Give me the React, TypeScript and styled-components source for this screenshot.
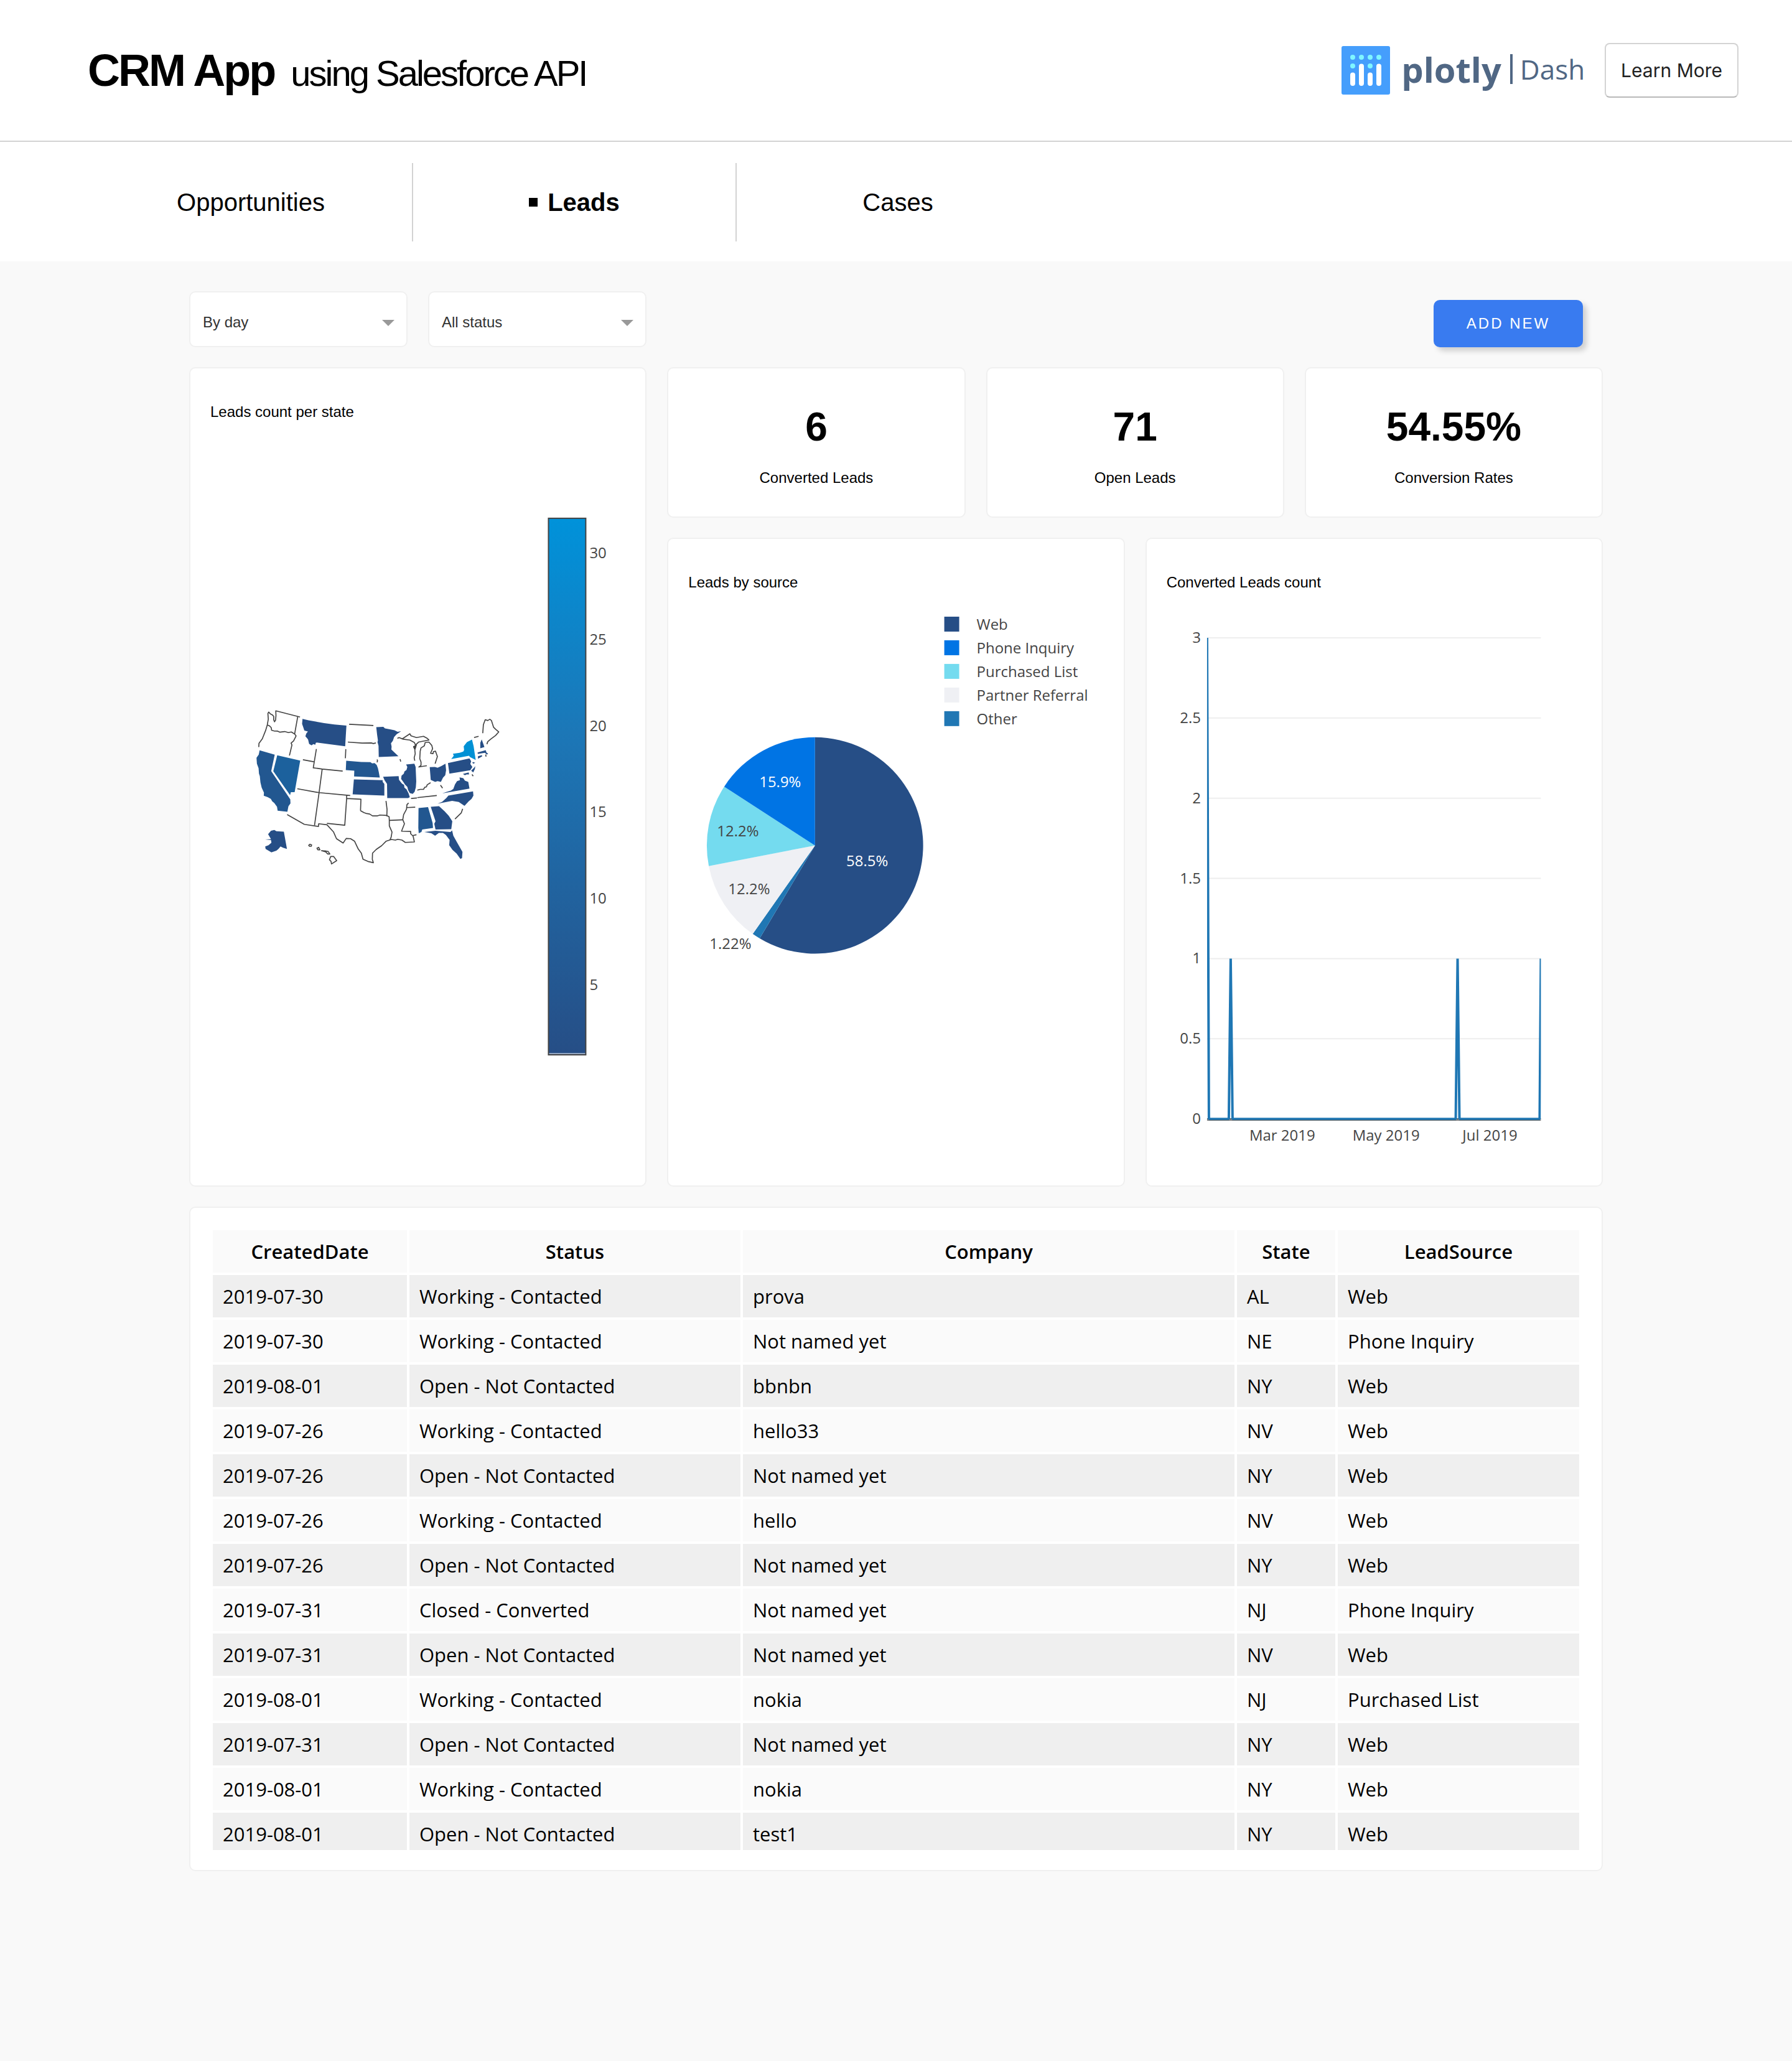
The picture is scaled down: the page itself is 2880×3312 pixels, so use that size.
import React from "react";
import styled, { createGlobalStyle } from "styled-components";

const sans = `"Liberation Sans", Arial, Helvetica, sans-serif`;
const plotFont = `"Open Sans", "Noto Sans", sans-serif`;

const GlobalStyle = createGlobalStyle`
  *, *::before, *::after { box-sizing: border-box; }
  body {
    margin: 0;
    background: #f9f9f9;
    color: #000;
    font-family: ${sans};
    font-size: 24px;
  }
`;

/* ---------- header ---------- */

const Header = styled.header`
  display: flex;
  align-items: center;
  justify-content: space-between;
  height: 228px;
  padding: 0 86px 0 141px;
  background: #fff;
  border-bottom: 2px solid #d3d3d3;
`;

const Title = styled.h1`
  display: flex;
  align-items: baseline;
  gap: 26px;
  margin: 0;
  padding-top: 4px;
  font-size: 72px;
  line-height: 80px;
  letter-spacing: -3px;
`;

const Subtitle = styled.span`
  font-size: 58px;
  font-weight: 400;
`;

const HeaderLinks = styled.div`
  display: flex;
  align-items: center;
  gap: 32px;
`;

const Brand = styled.a`
  display: flex;
  align-items: center;
  color: #506784;
  font-family: ${plotFont};
  line-height: 74px;
  text-decoration: none;
`;

const BrandMark = styled.svg`
  width: 78px;
  height: 78px;
`;

const BrandName = styled.span`
  margin-left: 18px;
  padding-bottom: 4px;
  font-size: 56px;
  font-weight: 700;
`;

const BrandProduct = styled.span`
  display: flex;
  align-items: center;
  margin-left: 14px;
  padding-bottom: 4px;
  font-size: 44px;
  font-weight: 500;

  &::before {
    content: "";
    width: 4px;
    height: 48px;
    margin-right: 12px;
    background: #506784;
  }
`;

const LearnMore = styled.button`
  height: 88px;
  padding: 0 24px;
  color: #222;
  font-family: Inter, sans-serif;
  font-size: 30px;
  background: #fff;
  border: 2px solid #d3d3d3;
  border-bottom-color: #b8b8b8;
  border-radius: 8px;
`;

/* ---------- tabs ---------- */

const Tabs = styled.nav`
  display: flex;
  padding: 34px 144px 32px;
  background: #fff;
`;

const Tab = styled.a<{ $active?: boolean }>`
  display: flex;
  align-items: center;
  justify-content: center;
  gap: 16px;
  width: 520px;
  height: 126px;
  color: #000;
  font-size: 40px;
  font-weight: ${(p) => (p.$active ? 700 : 400)};
  text-decoration: none;
  border-right: 2px solid #d3d3d3;

  &:last-child {
    border-right-color: transparent;
  }

  &::before {
    content: "";
    display: ${(p) => (p.$active ? "block" : "none")};
    width: 14px;
    height: 14px;
    background: #000;
  }
`;

/* ---------- page body ---------- */

const Main = styled.main`
  display: flex;
  flex-direction: column;
  gap: 32px;
  padding: 48px 304px 304px;
`;

const Toolbar = styled.div`
  display: flex;
  align-items: flex-end;
  justify-content: space-between;
  padding-right: 32px;
`;

const Filters = styled.div`
  display: flex;
  gap: 33px;
`;

const SelectBox = styled.div`
  position: relative;

  &::after {
    content: "";
    position: absolute;
    top: 46px;
    right: 21px;
    border: 10px solid transparent;
    border-top-color: #999;
    border-bottom: 0;
    pointer-events: none;
  }
`;

const Select = styled.select`
  display: block;
  width: 351px;
  height: 90px;
  padding: 8px 48px 0 20px;
  color: #333;
  font-family: ${sans};
  font-size: 24px;
  background: #fff;
  border: 2px solid #f0f0f0;
  border-radius: 10px;
  appearance: none;
`;

const AddButton = styled.button`
  width: 240px;
  height: 76px;
  color: #fff;
  font-family: ${sans};
  font-size: 24px;
  font-weight: 500;
  letter-spacing: 3px;
  text-transform: uppercase;
  background: #397bf0;
  border: 0;
  border-radius: 10px;
  box-shadow: 6px 6px 8px rgba(0, 0, 0, 0.17);
`;

const Card = styled.section`
  display: flex;
  flex-direction: column;
  min-width: 0;
  background: #fff;
  border: 2px solid #f0f0f0;
  border-radius: 10px;
`;

const Dashboard = styled.div`
  display: grid;
  grid-template-columns: repeat(3, minmax(0, 1fr));
  gap: 32px 33px;
`;

const MapCard = styled(Card)`
  grid-row: 1 / span 2;
`;

const Stats = styled.div`
  grid-column: 2 / span 2;
  display: grid;
  grid-template-columns: repeat(3, minmax(0, 1fr));
  gap: 33px;
`;

const StatCard = styled(Card)`
  align-items: center;
  height: 242px;
  padding-top: 66px;
`;

const StatValue = styled.strong`
  font-size: 64px;
  line-height: 56px;
`;

const StatLabel = styled.span`
  margin-top: 34px;
  line-height: 40px;
`;

const CardTitle = styled.h2`
  margin: 0;
  padding: 52px 32px 20px;
  font-size: 24px;
  font-weight: 400;
  line-height: 36px;
`;

const Plot = styled.svg`
  display: block;
  width: 100%;
  height: auto;
  fill: #444;
  font-family: ${plotFont};
  font-size: 24px;
`;

/* ---------- table ---------- */

const TableCard = styled(Card)`
  padding: 32px;
`;

const Scroller = styled.div`
  height: 1000px;
  overflow: auto;
  scrollbar-width: none;
`;

const Table = styled.table`
  width: 100%;
  table-layout: fixed;
  border-spacing: 4px;
  font-family: ${plotFont};
  font-size: 31px;
  line-height: 36px;
`;

const Col = styled.col<{ $width?: number }>`
  width: ${(p) => (p.$width ? `${p.$width}px` : "auto")};
`;

const Row = styled.tr`
  background: #fafafa;

  tbody &:nth-child(odd) {
    background: #efefef;
  }
`;

const HeadCell = styled.th`
  padding: 16px;
  font-weight: 600;
  text-align: center;
`;

const Cell = styled.td`
  padding: 16px;
`;

/* ---------- data ---------- */

const stats = [
  { value: "6", label: "Converted Leads" },
  { value: "71", label: "Open Leads" },
  { value: "54.55%", label: "Conversion Rates" },
];

const sources = [
  { name: "Web", color: "#264e86" },
  { name: "Phone Inquiry", color: "#0074e4" },
  { name: "Purchased List", color: "#74dbef" },
  { name: "Partner Referral", color: "#eff0f4" },
  { name: "Other", color: "#2077b4" },
];

const slices = [
  { count: 48, color: "#264e86", text: "58.5%", ink: "#fff", x: 320, y: 418 },
  { count: 1, color: "#2077b4", text: "1.22%", ink: "#444", x: 100, y: 552 },
  { count: 10, color: "#eff0f4", text: "12.2%", ink: "#444", x: 130, y: 463 },
  { count: 10, color: "#74dbef", text: "12.2%", ink: "#444", x: 112, y: 370 },
  { count: 13, color: "#0074e4", text: "15.9%", ink: "#fff", x: 180, y: 291 },
];

const columns = ["CreatedDate", "Status", "Company", "State", "LeadSource"];
const columnWidths = [312, 532, undefined, 158, 388];

const rows = [
  ["2019-07-30", "Working - Contacted", "prova", "AL", "Web"],
  ["2019-07-30", "Working - Contacted", "Not named yet", "NE", "Phone Inquiry"],
  ["2019-08-01", "Open - Not Contacted", "bbnbn", "NY", "Web"],
  ["2019-07-26", "Working - Contacted", "hello33", "NV", "Web"],
  ["2019-07-26", "Open - Not Contacted", "Not named yet", "NY", "Web"],
  ["2019-07-26", "Working - Contacted", "hello", "NV", "Web"],
  ["2019-07-26", "Open - Not Contacted", "Not named yet", "NY", "Web"],
  ["2019-07-31", "Closed - Converted", "Not named yet", "NJ", "Phone Inquiry"],
  ["2019-07-31", "Open - Not Contacted", "Not named yet", "NV", "Web"],
  ["2019-08-01", "Working - Contacted", "nokia", "NJ", "Purchased List"],
  ["2019-07-31", "Open - Not Contacted", "Not named yet", "NY", "Web"],
  ["2019-08-01", "Working - Contacted", "nokia", "NY", "Web"],
  ["2019-08-01", "Open - Not Contacted", "test1", "NY", "Web"],
];

/* States with leads, filled by their count. */
const filledStates = [
  { id: "MT", color: "#264e86", d: "M316 134L345 141 420 154 470 161 528 166 525 215 522 266 430 254 385 248 380 250 378 259 368 256 360 262 348 255 343 234 338 227 330 218 334 205 342 195 325 190 320 175 314 158Z" },
  { id: "MN", color: "#264e86", d: "M672 174L706 172 714 180 738 184 760 189 775 196 792 193 770 208 758 222 752 240 743 252 746 268 745 282 760 296 779 314 684 318 683 264 678 246 680 238 676 210Z" },
  { id: "CA", color: "#225790", d: "M109 286L182 307 165 386 257 522 258 542 248 556 243 582 196 577 193 558 180 540 170 532 163 520 148 512 129 505 130 490 119 466 113 440 110 410 106 398 104 372 96 350 94 322 105 306Z" },
  { id: "NV", color: "#1c619d", d: "M194 310L305 335 278 488 260 488 256 502 175 386Z" },
  { id: "NE", color: "#225790", d: "M527 336L600 342 644 343 652 349 664 347 674 356 680 372 684 390 689 417 565 412 566 384 525 381Z" },
  { id: "KS", color: "#264e86", d: "M564 426L703 430 703 438 711 448 711 504 558 498Z" },
  { id: "MO", color: "#264e86", d: "M705 413L780 410 782 428 796 446 806 452 808 466 818 474 828 494 834 512 826 516 725 516 724 448 712 430Z" },
  { id: "IL", color: "#264e86", d: "M816 354L856 350 862 366 865 436 863 464 857 486 848 496 834 492 826 478 822 462 810 450 804 440 792 424 794 408 805 398 808 388 818 380 822 366Z" },
  { id: "OH", color: "#264e86", d: "M930 367L955 366 968 370 985 362 1006 350 1009 382 1005 406 994 418 984 438 968 434 956 438 935 428Z" },
  { id: "PA", color: "#264e86", d: "M1018 347L1122 325 1130 338 1126 352 1136 366 1126 382 1025 398Z" },
  { id: "NY", color: "#0091d5", d: "M1034 328L1046 312 1042 302 1074 298 1092 292 1096 284 1094 266 1110 246 1134 234 1142 266 1146 294 1152 332 1124 318 1120 312Z" },
  { id: "NJ", color: "#264e86", d: "M1138 342L1150 346 1140 350 1136 346ZM1150 362L1148 376 1140 392 1130 384 1142 372Z" },
  { id: "NH", color: "#264e86", d: "M1174 276L1174 250 1181 233 1194 270Z" },
  { id: "MA", color: "#264e86", d: "M1161 296L1200 285 1204 296 1212 302 1206 306 1196 298 1162 303Z" },
  { id: "CT", color: "#264e86", d: "M1163 314L1182 309 1183 315 1163 326Z" },
  { id: "MD", color: "#264e86", d: "M1090 400L1118 392 1120 402 1108 402 1100 406Z" },
  { id: "VA", color: "#264e86", d: "M990 494L1012 486 1032 480 1044 472 1052 450 1062 434 1076 430 1074 416 1092 420 1100 432 1116 438 1122 470Z" },
  { id: "NC", color: "#264e86", d: "M968 543L990 534 1010 516 1020 504 1139 484 1141 504 1132 520 1118 532 1098 554 1070 535 1038 530Z" },
  { id: "GA", color: "#264e86", d: "M935 558L975 555 1002 580 1022 602 1039 628 1034 666 958 668 952 640 958 628Z" },
  { id: "AL", color: "#225790", d: "M876 564L922 560 944 636 946 660 894 668 890 680 877 686 875 660Z" },
  { id: "FL", color: "#264e86", d: "M904 680L958 674 1030 680 1038 672 1044 698 1062 730 1080 762 1088 776 1086 806 1078 810 1060 784 1040 766 1024 744 1026 718 1008 694 994 684 974 684 956 698 938 686Z" },
  { id: "AK", color: "#264e86", d: "M226 678L241 762 222 756 210 750 200 762 190 770 166 778 138 762 136 750 152 744 166 732 164 719 136 716 164 714 150 690 164 674 180 670 190 676Z" },
];

/* Borders between the states that have no leads. */
const stateBorders = [
  "M105 270L106 252 122 230 138 190 146 163 151 135 149 108 153 101 160 109 171 115 177 122 177 138 181 148 186 140 188 118 187 95 304 125",
  "M293 123L278 207 285 216 273 240 261 251 265 260 253 311",
  "M146 163L157 168 165 176 167 189 178 192 196 193 206 198 230 195 248 200 262 197 278 207",
  "M541 160L658 166M535 246L604 251 648 250 658 253 670 250M525 280L523 324",
  "M318 331L370 341M383 279L368 370 411 376 510 386M411 376L396 490 374 648",
  "M291 471L396 490 546 504M529 504L529 518 520 647 434 638M529 518L598 522 596 577",
  "M242 596L325 643 393 653 394 640 434 645 466 680 480 712 512 733 527 711 548 712 567 724 585 762 600 782 608 811 632 822 658 828 653 812 654 782 672 764 698 746 720 724 745 716 764 719 776 715 796 719 812 730 856 728 850 700 838 688 838 677 794 676 808 640 800 620 804 596 818 570 820 548 828 540",
  "M596 577L612 586 622 590 640 593 654 602 678 602 690 598 722 600 734 606 735 624 735 650 748 680 744 704 738 718",
  "M719 530L724 570 723 604M735 624L802 621M820 562L860 560M848 697L866 693",
  "M676 330L678 336 676 344M787 328L790 340M870 478L884 474 900 474 906 464 914 462 918 452 934 442M870 514L964 504M840 518L868 516M982 454L992 468",
  "M774 228L782 224 802 232 834 236 856 248 862 262 852 268 858 280 M798 230L834 206 840 216 866 224 900 218 918 228 926 236 876 246 862 260",
  "M866 258L858 284 860 302 855 322 858 336",
  "M876 368L888 358 888 342 882 326 884 290 888 274 904 264 908 248 926 246 940 262 944 278 934 300 946 302 948 292 958 290 967 316 956 350M876 366L916 360",
  "M1144 224L1166 218M1186 203L1189 162 1198 138 1210 142 1220 136 1228 142 1238 174 1248 184 1263 197 1248 214 1224 232 1210 244 1206 256",
  "M1089 568L1082 588 1052 617M1134 402L1140 410M1200 306L1202 316",
  "M346 744L352 739 360 742 358 749 350 749ZM386 758L394 754 400 766 390 766ZM408 770L430 772 440 774 448 786 438 786 428 776ZM452 798L466 798 481 818 456 834 454 822 446 814Z",
];

/* ---------- charts ---------- */

function MapPlot() {
  return (
    <Plot viewBox="0 0 732 1206" role="img" aria-label="Leads count per state">
      <defs>
        <linearGradient id="scale" x1="0" y1="0" x2="0" y2="1">
          <stop offset="0" stopColor="#0092da" />
          <stop offset="0.4" stopColor="#1c77b7" />
          <stop offset="1" stopColor="#264e86" />
        </linearGradient>
      </defs>
      <g transform="translate(75 411) scale(0.3333)">
        {filledStates.map((s) => (
          <path key={s.id} d={s.d} fill={s.color} />
        ))}
        <path d="M850 268L866 262 862 276 856 282Z" fill="#444" />
        {stateBorders.map((d) => (
          <path key={d} d={d} fill="none" stroke="#444" strokeWidth="5" strokeLinejoin="round" />
        ))}
      </g>
      <rect x="576" y="133" width="60" height="863" fill="url(#scale)" stroke="#444" strokeWidth="2" />
      <path d="M577 994H635" stroke="#fff" strokeWidth="1" />
      {[30, 25, 20, 15, 10, 5].map((n, i) => (
        <text key={n} x="642" y={197 + Math.round(i * 139)}>
          {n}
        </text>
      ))}
    </Plot>
  );
}

function PiePlot() {
  const cx = 236;
  const cy = 385;
  const r = 174;
  const total = slices.reduce((sum, s) => sum + s.count, 0);
  let seen = 0;
  const point = (n: number) => {
    const a = (n / total) * Math.PI * 2;
    return `${cx + r * Math.sin(a)} ${cy - r * Math.cos(a)}`;
  };
  return (
    <Plot viewBox="0 0 732 932" role="img" aria-label="Leads by source">
      {slices.map((s) => {
        const start = point(seen);
        seen += s.count;
        const large = s.count > total / 2 ? 1 : 0;
        return (
          <path
            key={s.text + s.color}
            d={`M${cx} ${cy}L${start}A${r} ${r} 0 ${large} 1 ${point(seen)}Z`}
            fill={s.color}
          />
        );
      })}
      {slices.map((s) => (
        <text key={s.text + s.color} x={s.x} y={s.y} fill={s.ink} textAnchor="middle">
          {s.text}
        </text>
      ))}
      {sources.map((s, i) => (
        <g key={s.name}>
          <rect x="444" y={17 + i * 38} width="24" height="24" fill={s.color} />
          <text x="496" y={38 + i * 38}>
            {s.name}
          </text>
        </g>
      ))}
    </Plot>
  );
}

function LinePlot() {
  const ticks = ["3", "2.5", "2", "1.5", "1", "0.5", "0"];
  const months = [
    { label: "Mar 2019", x: 218 },
    { label: "May 2019", x: 385 },
    { label: "Jul 2019", x: 552 },
  ];
  return (
    <Plot viewBox="0 0 732 932" role="img" aria-label="Converted Leads count">
      <defs>
        <clipPath id="plotArea">
          <rect x="97" y="51" width="537" height="776" />
        </clipPath>
      </defs>
      {ticks.map((t, i) => {
        const y = 51 + i * 129;
        return (
          <g key={t}>
            <path d={`M97 ${y}H634`} stroke={t === "0" ? "#444" : "#eee"} strokeWidth="2" />
            <text x="87" y={y + 8} textAnchor="end">
              {t}
            </text>
          </g>
        );
      })}
      <path
        d="M97 51L100 825H132L135 567 138 825H497L500 567 503 825H632L634 567"
        fill="none"
        stroke="#1f77b4"
        strokeWidth="4"
        strokeLinejoin="bevel"
        clipPath="url(#plotArea)"
      />
      <path d="M97 827H634" stroke="#444" strokeWidth="1" />
      {months.map((m) => (
        <text key={m.label} x={m.x} y="860" textAnchor="middle">
          {m.label}
        </text>
      ))}
    </Plot>
  );
}

function Logo() {
  const xs = [18, 32, 46, 60];
  return (
    <BrandMark viewBox="0 0 78 78" aria-hidden="true">
      <rect width="78" height="78" rx="3" fill="#459efc" />
      {xs.map((x) => (
        <circle key={x} cx={x} cy="18" r="4" fill="#7ff6ff" />
      ))}
      <circle cx="18" cy="32" r="4" fill="#7ff6ff" />
      <circle cx="46" cy="32" r="4" fill="#7ff6ff" />
      <path
        d="M18 46.500V60M32 32.500V60M46 46.500V60M60 32.500V60"
        stroke="#fff"
        strokeWidth="8"
        strokeLinecap="round"
      />
    </BrandMark>
  );
}

export default function App() {
  return (
    <>
      <GlobalStyle />
      <Header>
        <Title>
          CRM App
          <Subtitle>using Salesforce API</Subtitle>
        </Title>
        <HeaderLinks>
          <Brand href="#">
            <Logo />
            <BrandName>plotly</BrandName>
            <BrandProduct>Dash</BrandProduct>
          </Brand>
          <LearnMore type="button">Learn More</LearnMore>
        </HeaderLinks>
      </Header>

      <Tabs>
        <Tab href="#opportunities">Opportunities</Tab>
        <Tab href="#leads" $active aria-current="page">
          Leads
        </Tab>
        <Tab href="#cases">Cases</Tab>
      </Tabs>

      <Main>
        <Toolbar>
          <Filters>
            <SelectBox>
              <Select aria-label="Period" defaultValue="By day">
                <option>By day</option>
              </Select>
            </SelectBox>
            <SelectBox>
              <Select aria-label="Lead status" defaultValue="All status">
                <option>All status</option>
              </Select>
            </SelectBox>
          </Filters>
          <AddButton type="button">Add new</AddButton>
        </Toolbar>

        <Dashboard>
          <MapCard>
            <CardTitle>Leads count per state</CardTitle>
            <MapPlot />
          </MapCard>
          <Stats>
            {stats.map((s) => (
              <StatCard key={s.label}>
                <StatValue>{s.value}</StatValue>
                <StatLabel>{s.label}</StatLabel>
              </StatCard>
            ))}
          </Stats>
          <Card>
            <CardTitle>Leads by source</CardTitle>
            <PiePlot />
          </Card>
          <Card>
            <CardTitle>Converted Leads count</CardTitle>
            <LinePlot />
          </Card>
        </Dashboard>

        <TableCard>
          <Scroller>
            <Table>
              <colgroup>
                {columns.map((c, i) => (
                  <Col key={c} $width={columnWidths[i]} />
                ))}
              </colgroup>
              <thead>
                <Row>
                  {columns.map((c) => (
                    <HeadCell key={c} scope="col">
                      {c}
                    </HeadCell>
                  ))}
                </Row>
              </thead>
              <tbody>
                {rows.map((row, i) => (
                  <Row key={i}>
                    {row.map((value, j) => (
                      <Cell key={columns[j]}>{value}</Cell>
                    ))}
                  </Row>
                ))}
              </tbody>
            </Table>
          </Scroller>
        </TableCard>
      </Main>
    </>
  );
}
